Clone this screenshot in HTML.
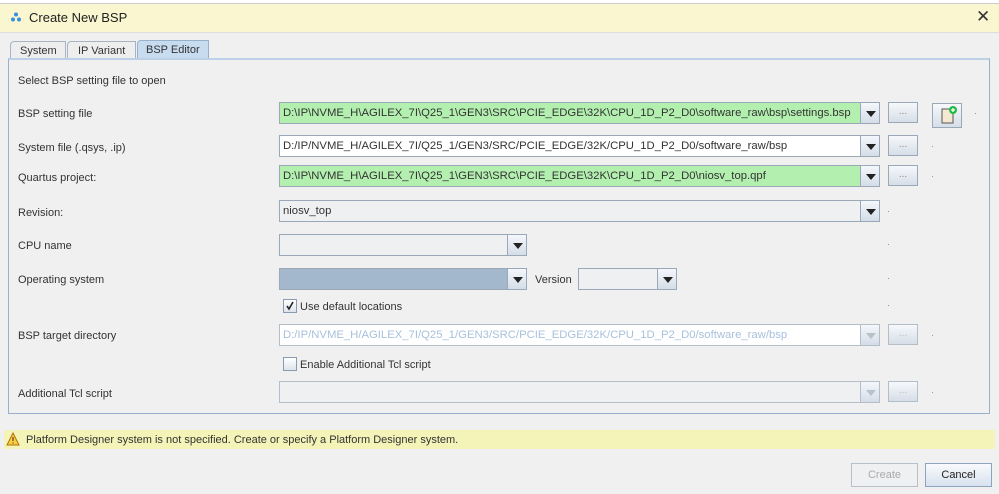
<!DOCTYPE html>
<html><head><meta charset="utf-8"><style>
*{box-sizing:border-box;margin:0;padding:0}
body{width:999px;height:494px;background:#f0f0f0;font-family:"Liberation Sans",sans-serif;font-size:11px;color:#333;position:relative;overflow:hidden}
.a{position:absolute}
.lbl{position:absolute;left:18px;font-size:11px;color:#333}
.cb{position:absolute;height:22px;border:1px solid #9aa8b8;background:#fff;font-size:11.3px;line-height:21px;padding-left:3px;white-space:nowrap;overflow:hidden;color:#333}
.g{background:#b3f0b0}
.arr{position:absolute;width:20px;height:22px;border:1px solid #9aa8b8;background:linear-gradient(#f4f7fb,#d4dde8)}
.arr:after{content:"";position:absolute;left:5px;top:8px;border-left:5px solid transparent;border-right:5px solid transparent;border-top:6px solid #222}
.arr.d:after{border-top-color:#b8c0c8}
.btn{position:absolute;width:30px;height:21px;border:1px solid #9aa8b8;background:linear-gradient(#f6f8fb,#d6dee8);text-align:center;color:#888;font-size:10px;line-height:18px}
.dot{position:absolute;width:1px;height:1px;background:#8899bb}
.chk{position:absolute;width:14px;height:14px;border:1px solid #8a9ab0;background:linear-gradient(#fff,#dde4ec)}
</style></head><body>
<div class="a" style="left:0;top:0;width:999px;height:4px;background:#fff;border-bottom:1px solid #ccc"></div>
<div class="a" style="left:0;top:4px;width:999px;height:28px;background:#f9f6d0"></div>
<div class="a" style="left:11px;top:12px;width:10px;height:10px">
<svg width="10" height="10"><circle cx="5" cy="2.5" r="2" fill="#3a8ee0"/><circle cx="2" cy="7.5" r="2" fill="#3a8ee0"/><circle cx="8" cy="7.5" r="2" fill="#3a8ee0"/></svg></div>
<div class="a" style="left:29px;top:10px;font-size:13px;color:#222">Create New BSP</div>
<div class="a" style="left:976px;top:7px;font-size:17px;color:#333">✕</div>
<div class="a" style="left:0;top:32px;width:999px;height:1px;background:#ddd"></div>
<div class="a" style="left:10px;top:41px;width:56px;height:17px;border:1px solid #a8b4c4;border-bottom:none;border-radius:4px 0 0 0;background:#eee;font-size:11px;padding:3px 0 0 9px">System</div>
<div class="a" style="left:67px;top:41px;width:69px;height:17px;border:1px solid #a8b4c4;border-bottom:none;border-radius:4px 0 0 0;background:#eee;font-size:11px;padding:3px 0 0 10px">IP Variant</div>
<div class="a" style="left:137px;top:40px;width:72px;height:19px;border:1px solid #98b0cc;border-bottom:none;border-radius:4px 0 0 0;background:#c8dcf0;font-size:11px;padding:3px 0 0 8px">BSP Editor</div>
<div class="a" style="left:8px;top:58px;width:982px;height:356px;border:1px solid #98b0cc;border-top:2px solid #bcd0e8"></div>
<div class="lbl" style="top:75px">Select BSP setting file to open</div>
<div class="lbl" style="top:108px">BSP setting file</div>
<div class="lbl" style="top:142px">System file (.qsys, .ip)</div>
<div class="lbl" style="top:172px">Quartus project:</div>
<div class="lbl" style="top:207px">Revision:</div>
<div class="lbl" style="top:240px">CPU name</div>
<div class="lbl" style="top:274px">Operating system</div>
<div class="lbl" style="top:330px">BSP target directory</div>
<div class="lbl" style="top:388px">Additional Tcl script</div>

<div class="cb g" style="left:279px;top:102px;width:582px">D:\IP\NVME_H\AGILEX_7I\Q25_1\GEN3\SRC\PCIE_EDGE\32K\CPU_1D_P2_D0\software_raw\bsp\settings.bsp</div>
<div class="arr" style="left:860px;top:102px"></div>
<div class="btn" style="left:888px;top:102px">...</div>
<div class="a" style="left:932px;top:103px;width:30px;height:25px;border:1px solid #9aa8b8;background:linear-gradient(#f6f8fb,#d6dee8)">
<svg width="28" height="23"><rect x="9" y="5" width="11" height="14" fill="#f5e8d0" stroke="#555"/><circle cx="20" cy="6" r="4" fill="#22bb44"/><path d="M18 6h4M20 4v4" stroke="#fff" stroke-width="1.3"/></svg></div>
<div class="dot" style="left:975px;top:113px"></div>

<div class="cb" style="left:279px;top:135px;width:582px">D:/IP/NVME_H/AGILEX_7I/Q25_1/GEN3/SRC/PCIE_EDGE/32K/CPU_1D_P2_D0/software_raw/bsp</div>
<div class="arr" style="left:860px;top:135px"></div>
<div class="btn" style="left:888px;top:135px">...</div>
<div class="dot" style="left:932px;top:146px"></div>

<div class="cb g" style="left:279px;top:165px;width:582px">D:\IP\NVME_H\AGILEX_7I\Q25_1\GEN3\SRC\PCIE_EDGE\32K\CPU_1D_P2_D0\niosv_top.qpf</div>
<div class="arr" style="left:860px;top:165px"></div>
<div class="btn" style="left:888px;top:165px">...</div>
<div class="dot" style="left:932px;top:176px"></div>

<div class="cb" style="left:279px;top:200px;width:582px;background:#eef0f2">niosv_top</div>
<div class="arr" style="left:860px;top:200px"></div>
<div class="dot" style="left:888px;top:211px"></div>

<div class="cb" style="left:279px;top:234px;width:229px;background:#eef0f2"></div>
<div class="arr" style="left:507px;top:234px"></div>
<div class="dot" style="left:888px;top:244px"></div>

<div class="cb" style="left:279px;top:268px;width:229px;background:#a3b8cc"></div>
<div class="arr" style="left:507px;top:268px"></div>
<div class="a" style="left:535px;top:274px;font-size:11px">Version</div>
<div class="cb" style="left:578px;top:268px;width:80px;background:#eef0f2"></div>
<div class="arr" style="left:657px;top:268px"></div>
<div class="dot" style="left:888px;top:278px"></div>

<div class="chk" style="left:283px;top:299px"><svg width="12" height="12"><path d="M3 6l2 3 4-7" stroke="#222" stroke-width="1.6" fill="none"/></svg></div>
<div class="a" style="left:300px;top:301px;font-size:11px">Use default locations</div>
<div class="dot" style="left:888px;top:305px"></div>

<div class="cb" style="left:279px;top:324px;width:582px;background:#fff;color:#a8c0dc;border-color:#b4bec8">D:/IP/NVME_H/AGILEX_7I/Q25_1/GEN3/SRC/PCIE_EDGE/32K/CPU_1D_P2_D0/software_raw/bsp</div>
<div class="arr d" style="left:860px;top:324px;border-color:#b4bec8"></div>
<div class="btn" style="left:888px;top:324px;border-color:#b4bec8;color:#bbb">...</div>
<div class="dot" style="left:932px;top:335px"></div>

<div class="chk" style="left:283px;top:357px"></div>
<div class="a" style="left:300px;top:359px;font-size:11px">Enable Additional Tcl script</div>

<div class="cb" style="left:279px;top:381px;width:582px;background:#eef0f2;border-color:#b4bec8"></div>
<div class="arr d" style="left:860px;top:381px;border-color:#b4bec8"></div>
<div class="btn" style="left:888px;top:381px;border-color:#b4bec8;color:#bbb">...</div>
<div class="dot" style="left:932px;top:392px"></div>

<div class="a" style="left:4px;top:430px;width:991px;height:19px;background:#f4f4b8"></div>
<div class="a" style="left:6px;top:432px"><svg width="14" height="14"><path d="M7 1L13 13H1Z" fill="#f8d040" stroke="#b07010"/><path d="M7 5v4M7 10.5v1" stroke="#633" stroke-width="1.2"/></svg></div>
<div class="a" style="left:26px;top:434px;font-size:11px;color:#333">Platform Designer system is not specified. Create or specify a Platform Designer system.</div>

<div class="a" style="left:851px;top:463px;width:67px;height:24px;border:1px solid #b8c0c8;background:#eef0f2;color:#aaa;text-align:center;line-height:23px;font-size:11px">Create</div>
<div class="a" style="left:925px;top:463px;width:67px;height:24px;border:1px solid #8da4c0;background:linear-gradient(#f8fafc,#d8e2ee);color:#222;text-align:center;line-height:23px;font-size:11px">Cancel</div>
</body></html>
